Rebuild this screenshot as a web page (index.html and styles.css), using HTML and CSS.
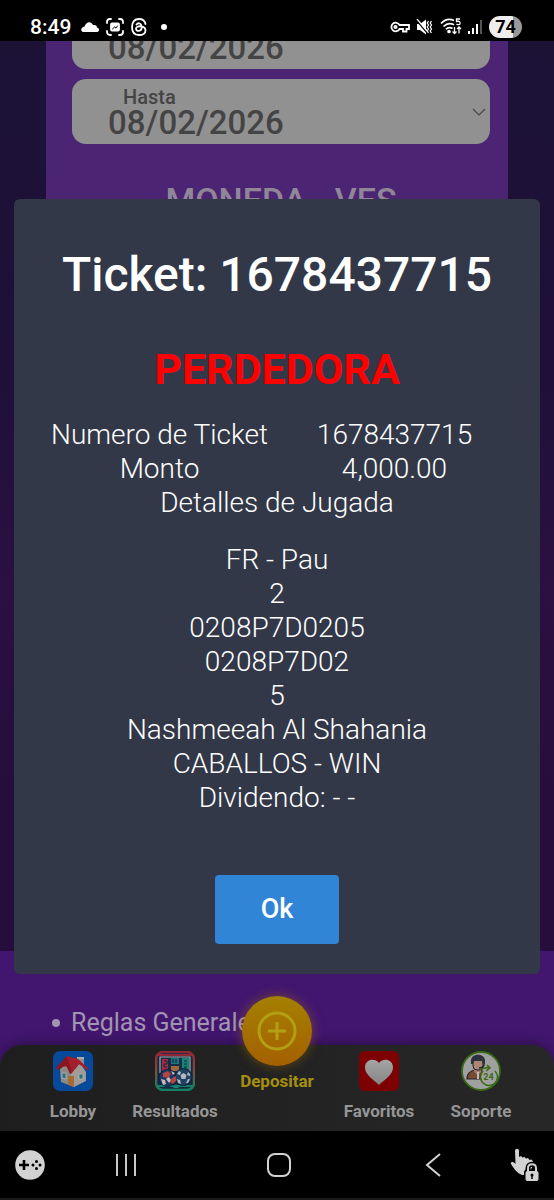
FILE: index.html
```html
<!DOCTYPE html>
<html lang="es">
<head>
<meta charset="utf-8">
<meta name="viewport" content="width=device-width, initial-scale=1">
<title>Ticket</title>
<link rel="stylesheet" href="styles.css">
</head>
<body>
<header class="status">
  <div class="status-group status-left">
    <time class="clock">8:49</time>
    <svg width="18" height="12" viewBox="0 0 18 12" fill="#fff"><path d="M3 11C-1 11-.5 6 3.500 5.500 5 .500 10-.500 12 4c3-.5 4 1 4 2.500 3 .5 2.500 4.500 0 4.500z"/></svg>
    <svg width="18" height="18" viewBox="0 0 18 18" fill="none" stroke="#fff" stroke-width="1.800" stroke-linecap="round"><path d="M1 5V4a3 3 0 0 1 3-3h1M13 1h1a3 3 0 0 1 3 3v1M17 13v1a3 3 0 0 1-3 3h-1M5 17H4a3 3 0 0 1-3-3v-1"/><rect x="5" y="5.500" width="8" height="7" rx="1" fill="#fff"/><path d="M6.500 11l2-2 1.500 1 1.500-2" stroke="#000" stroke-width="1"/></svg>
    <svg width="16" height="18" viewBox="0 0 16 18" fill="none" stroke="#fff" stroke-width="1.800" stroke-linecap="round"><path d="M14.500 6C13.800 2.500 11.500 1 8 1 3.500 1 1 4 1 9s2.500 8 7 8c4 0 6.500-2 6.500-4.600 0-5-9.500-5.400-9.500-1.600 0 3 5.700 2.800 5.700-1.400C10.700 4.800 7 4.500 5.500 6.500"/></svg>
    <span class="dot"></span>
  </div>
  <div class="status-group">
    <svg width="20" height="12" viewBox="0 0 20 12" fill="none" stroke="#fff" stroke-width="1.800"><path d="M9.500 4A4.300 4.300 0 1 0 9.500 8H13v2.500h3.500V8H19V4z"/><circle cx="5.500" cy="6" r="1.200"/></svg>
    <svg class="gap-mute" width="17" height="16" viewBox="0 0 17 16" fill="#fff"><path d="M1 5h3l6-4.500v15L4 11H1z"/><path d="M1 2l11 13" stroke="#000" stroke-width="1.200"/><path d="M1 0l11 13M12.500 2l-1.300 2 1.300 2-1.300 2 1.300 2-1.300 2 1.300 2M15.500 2l-1.300 2 1.300 2-1.300 2 1.300 2-1.300 2 1.300 2" fill="none" stroke="#fff" stroke-width="1.200"/></svg>
    <svg class="gap-wifi" width="22" height="17" viewBox="0 0 22 17" fill="none" stroke="#fff" stroke-width="1.700"><path d="M1 5.500C5 1.300 10 .700 14 2.500M3.500 8.500C6.500 5.500 10.500 5 14 6.800M6 11.200c2-2 4.500-2 6.500-.7"/><circle cx="9" cy="13.500" r="1" fill="#fff"/><path d="M20 1h-3.500v2.500c3-.8 4 .5 3.500 2.200-.5 1.300-2.500 1.300-3.500.3" stroke-width="1.300"/><path d="M14.500 9v6.500M12.500 13.500l2 2 2-2M19 15.500V9M17 11l2-2 2 2" stroke-width="1.300"/></svg>
    <svg width="15" height="16" viewBox="0 0 15 16" fill="#fff"><rect y="12" width="2" height="3"/><rect x="4" y="9" width="2" height="6"/><rect x="8" y="5" width="2" height="10"/><rect x="12" y="1" width="2" height="14" fill="#555"/></svg>
    <span class="battery">74</span>
  </div>
</header>

<div class="app">
  <main class="page">
    <section class="panel">
      <div class="field field-from">
        <select aria-label="Fecha inicial"><option>08/02/2026</option></select>
      </div>
      <div class="field">
        <label for="hasta">Hasta</label>
        <select id="hasta"><option>08/02/2026</option></select>
        <svg class="chevron" width="14" height="8" viewBox="0 0 14 8" fill="none" stroke="#444" stroke-width="1.200"><path d="M1 1l6 6 6-6"/></svg>
      </div>
      <h2 class="currency">MONEDA - VES</h2>
    </section>
  </main>
  <footer class="footer">
    <ul class="links"><li><a href="#reglas">Reglas Generales</a></li></ul>
  </footer>

  <nav class="tabs">
    <a class="tab" href="#lobby">
      <svg width="40" height="40" viewBox="0 0 40 40"><rect width="40" height="40" rx="7" fill="#07499b"/><path d="M7 18l9-8 10 12-5 14-13-5z" fill="#8d8985"/><path d="M18 23l9-11 6 9v9l-12 6-3-2z" fill="#a09b96"/><path d="M24 6h7v10l-7-3z" fill="#8e8d8c"/><path d="M24 6h7v2h-7z" fill="#aaa"/><path d="M3 17L14 5l11 3 11 10-2 1-8-6-7 9-3-6-9-1-2 4z" fill="#a2202c"/><path d="M3 17L14 5l5 17-2 1-4-9-8 5z" fill="#8a1621"/><path d="M15 25h6v11l-6-2z" fill="#a56b35"/><path d="M26 23h4v5h-4zM9 22h4v6l-4-1z" fill="#27717d" stroke="#bbb6ad" stroke-width=".8"/></svg>
      <span>Lobby</span>
    </a>
    <a class="tab" href="#resultados">
      <svg width="40" height="40" viewBox="0 0 40 40"><defs><linearGradient id="rim" x2="0" y2="1"><stop stop-color="#8f2637"/><stop offset=".45" stop-color="#8b4638"/><stop offset="1" stop-color="#118268"/></linearGradient></defs><rect x="1" y="1" width="38" height="38" rx="7" fill="#142940" stroke="url(#rim)" stroke-width="2.500"/><path d="M3 4h34M3 35h34" stroke="url(#rim)" stroke-width="2"/><path d="M5 22V6h30v17" fill="#172c45" stroke="#aaa" stroke-width="1.200"/><path d="M7 8h6v12H7z" fill="#a42c43"/><path d="M9 10h3v3H9v3h3" fill="none" stroke="#142940"/><path d="M16 7h8v6h-8z" fill="#1b777c"/><path d="M18 8v4M21 8v4" stroke="#142940" stroke-width="1.200"/><path d="M16 15h8v5h-8z" fill="#9d693a"/><path d="M27 7h7v13h-7z" fill="#158675"/><path d="M29 10h3M29 13h3M29 16h3" stroke="#142940" stroke-width="1.200"/><circle cx="12.500" cy="27" r="8.500" fill="#1d3762" stroke="#102039"/><circle cx="28.500" cy="26" r="8.500" fill="#1f4163" stroke="#102039"/><path d="M8 22l5-2 3 3-3 4-5-1zM17 27l4-2v5l-3 3-3-2z" fill="#b74345"/><path d="M6 28l4 1 1 4-3 1zM16 20l4 2-2 2zM11 28l3-2 2 3-2 3z" fill="#c5bdb9"/><path d="M25.500 24l3-2 3 2-1 4h-4zM22 23l2-3 2 1-1 3zM33 21l2 2v2l-3-1zM22 28l3 1 1 4-3-1zM33 28h2l-2 4-2 0z" fill="#b4b8bc"/><path d="M18 37l3-4 3 4z" fill="#178875"/></svg>
      <span>Resultados</span>
    </a>
    <a class="tab deposit" href="#depositar">
      <span class="coin"><svg width="40" height="40" viewBox="0 0 40 40" fill="none" stroke="#b3a012" stroke-width="3"><circle cx="20" cy="20" r="18"/><path d="M20 11v18M11 20h18"/></svg></span>
      <span>Depositar</span>
    </a>
    <a class="tab" href="#favoritos">
      <svg width="40" height="40" viewBox="0 0 40 40"><defs><linearGradient id="heart" x2="0" y2="1"><stop stop-color="#a5a5a5"/><stop offset="1" stop-color="#858585"/></linearGradient></defs><rect width="40" height="40" rx="6" fill="#7d0003"/><path d="M20 34C15 29 6 24 6 16.500 6 8 16 6.500 20 12c4-5.500 14-4 14 4.500C34 24 25 29 20 34z" fill="url(#heart)"/></svg>
      <span>Favoritos</span>
    </a>
    <a class="tab" href="#soporte">
      <svg width="40" height="40" viewBox="0 0 40 40"><circle cx="20" cy="20" r="19" fill="#a0a0a0" stroke="#376b16" stroke-width="1.800"/><path d="M6 28c0-6 3-8 8-9h4c5 1 7 3 7 9z" fill="#774b31" stroke="#24242e" stroke-width="1.200"/><path d="M13 17v4l4 3 3-3v-4z" fill="#a77c6b"/><rect x="12" y="7" width="10" height="12" rx="4" fill="#ac8575" stroke="#24242e"/><path d="M10 13V9c1-7 13-7 14 0v4h-2l-1-3H13l-1 3z" fill="#30313f"/><path d="M23 13c0 3-2 4-5 4" fill="none" stroke="#24242e" stroke-width="1.500"/><path d="M17 21v7" stroke="#bbb" stroke-width="2"/><circle cx="28" cy="26" r="8" fill="#a0a0a0"/><path d="M22 20A8.500 8.500 0 1 0 34 20M19 19c3-2 6-3 10-2M26 14l3 3-4 3" fill="none" stroke="#376b16" stroke-width="1.500"/><text x="27.500" y="29" class="badge-text" text-anchor="middle">24</text></svg>
      <span>Soporte</span>
    </a>
  </nav>

  <div class="overlay">
    <div class="modal" role="dialog" aria-modal="true" aria-labelledby="ticket-title">
      <h1 class="title" id="ticket-title">Ticket: 1678437715</h1>
      <h2 class="result">PERDEDORA</h2>
      <table class="summary">
        <tbody>
          <tr><td>Numero de Ticket</td><td>1678437715</td></tr>
          <tr><td>Monto</td><td>4,000.00</td></tr>
          <tr><td colspan="2">Detalles de Jugada</td></tr>
        </tbody>
      </table>
      <div class="details">
        <div>FR - Pau</div>
        <div>2</div>
        <div>0208P7D0205</div>
        <div>0208P7D02</div>
        <div>5</div>
        <div>Nashmeeah Al Shahania</div>
        <div>CABALLOS - WIN</div>
        <div>Dividendo: - -</div>
      </div>
      <button class="ok" type="button">Ok</button>
    </div>
  </div>
</div>

<div class="system">
  <button type="button" aria-label="Juegos"><svg width="30" height="30" viewBox="0 0 30 30"><circle cx="15" cy="15" r="14.800" fill="#d2d2d2"/><path d="M9 10v10M4 15h10" stroke="#000" stroke-width="2.600"/><g fill="#000"><circle cx="21.500" cy="11.500" r="1.500"/><circle cx="21.500" cy="18.500" r="1.500"/><circle cx="18" cy="15" r="1.500"/><circle cx="25" cy="15" r="1.500"/></g></svg></button>
  <div class="system-main">
    <button type="button" aria-label="Recientes"><svg width="24" height="24" viewBox="0 0 24 24" stroke="#c8c8c8" stroke-width="2"><path d="M3 1v22M12 1v22M21 1v22"/></svg></button>
    <button type="button" aria-label="Inicio"><svg width="24" height="24" viewBox="0 0 24 24" fill="none" stroke="#d2d2d2" stroke-width="2"><rect x="1" y="1" width="22" height="22" rx="7"/></svg></button>
    <button type="button" aria-label="Atrás"><svg width="24" height="24" viewBox="0 0 24 24" fill="none" stroke="#d2d2d2" stroke-width="2"><path d="M19 1L6 12l13 11"/></svg></button>
  </div>
  <button type="button" aria-label="Bloqueo táctil"><svg width="30" height="34" viewBox="0 0 30 34" fill="#d2d2d2"><path d="M5 3c0-3 4-3 4 0v6l2-1 1.500 1.500 2-.5 1.500 1.500 2-.5L19.500 12l2-.5 1.500 2V18l-6 9h-5c-5-2-8-6-11-11-1-2 2-3 4.500 0z"/><path d="M18 24v-4c0-5 8-5 8 0v4" fill="none" stroke="#000" stroke-width="5"/><rect x="14" y="21.500" width="16" height="12.500" rx="3" fill="#000"/><path d="M18 24v-4c0-5 8-5 8 0v4" fill="none" stroke="#d2d2d2" stroke-width="2"/><rect x="15.500" y="23" width="13" height="10" rx="2"/><circle cx="22" cy="27" r="1.500" fill="#000"/><path d="M22 27v4" stroke="#000" stroke-width="1.500"/></svg></button>
</div>
</body>
</html>
```
FILE: styles.css
```css
* { box-sizing: border-box; }

body {
  margin: 0;
  height: 100vh;
  display: flex;
  flex-direction: column;
  background: #000;
  font-family: Roboto, "Liberation Sans", sans-serif;
}

svg { display: block; flex: none; }
h1, h2, ul { margin: 0; padding: 0; }
button { font: inherit; border: 0; padding: 0; background: none; }
a { color: inherit; text-decoration: none; }

.status {
  flex: none;
  height: 41px;
  padding: 12px 32px 0 30px;
  display: flex;
  justify-content: space-between;
  color: #fff;
}
.status-group { display: flex; align-items: center; gap: 6px; }
.status-left { gap: 7px; }
.clock { font-size: 21px; font-weight: 500; line-height: 28px; margin-right: 3px; }
.dot { width: 6px; height: 6px; border-radius: 50%; background: #fff; margin-left: 7px; }
.gap-wifi { margin-left: 1px; }
.battery {
  width: 33px;
  height: 22px;
  border-radius: 11px;
  background: linear-gradient(90deg, #eee 74%, #999 74%);
  color: #000;
  font-size: 18px;
  font-weight: 700;
  line-height: 22px;
  text-align: center;
}

.app {
  flex: 1;
  min-height: 0;
  position: relative;
  overflow: hidden;
  display: flex;
  flex-direction: column;
  background: linear-gradient(#1c1236, #1e1039 30%, #2b1041 50%, #260d3b 70%, #270d3b);
}
.page {
  flex: 1;
  min-height: 0;
  overflow: hidden;
  padding: 0 46px;
  display: flex;
}
.panel {
  flex: 1;
  margin-top: -48px;
  padding: 11px 18px 0 26px;
  display: flex;
  flex-direction: column;
  gap: 10px;
  background: #4b2573;
}
.field {
  flex: none;
  position: relative;
  height: 65px;
  padding: 8px 0 0 36px;
  display: flex;
  flex-direction: column;
  border-radius: 14px;
  background: #919191;
  color: #444;
}
.field-from { padding-top: 28px; }
.field label { padding-left: 15px; font-size: 20px; font-weight: 500; line-height: 20px; }
.field select {
  appearance: none;
  border: 0;
  padding: 0;
  background: none;
  color: inherit;
  font: 500 33px/32px Roboto, "Liberation Sans", sans-serif;
}
.chevron { position: absolute; right: 4px; top: 29px; }
.currency {
  margin-top: 26px;
  text-align: center;
  font-size: 34px;
  font-weight: 500;
  line-height: 40px;
  color: #8f8798;
}

.footer { flex: none; height: 180px; padding: 56px 0 0 52px; background: #42166f; }
.links { list-style: none; font-size: 25px; line-height: 32px; color: #a294b3; }
.links li { display: flex; align-items: center; gap: 11px; }
.links li::before { content: ""; width: 8px; height: 8px; border-radius: 50%; background: #a294b3; }

.tabs {
  position: absolute;
  left: 0;
  right: 0;
  bottom: 0;
  height: 86px;
  padding: 6px 22px 0;
  display: grid;
  grid-template-columns: repeat(5, 1fr);
  border-radius: 22px 22px 0 0;
  background: linear-gradient(90deg, #1e1e1e, #272727);
  box-shadow: 0 -2px 12px rgba(0, 0, 0, 0.35);
  color: #969696;
}
.tab {
  display: flex;
  flex-direction: column;
  align-items: center;
  gap: 10px;
  font-size: 17px;
  font-weight: 700;
  line-height: 20px;
}
.deposit { margin-top: -55px; gap: 5px; color: #a58f0e; }
.coin {
  width: 70px;
  height: 70px;
  flex: none;
  border-radius: 50%;
  display: grid;
  place-items: center;
  background: linear-gradient(#a48000, #a46000);
  box-shadow: 0 0 12px rgba(170, 115, 0, 0.5);
}
.badge-text { font: 700 9px Roboto, sans-serif; fill: #376b16; }

.overlay {
  position: absolute;
  inset: 0;
  padding: 0 14px;
  display: flex;
  align-items: center;
}
.modal {
  flex: 1;
  padding: 47px 28px 30px;
  display: flex;
  flex-direction: column;
  align-items: center;
  border-radius: 6px;
  background: #323848;
  color: #fff;
  text-align: center;
}
.title { font-size: 48px; font-weight: 500; line-height: 58px; }
.result { margin: 40px 0 24px; font-size: 43px; font-weight: 700; line-height: 50px; color: #f00; }
.summary {
  width: 100%;
  table-layout: fixed;
  border-collapse: collapse;
  font-size: 28px;
  font-weight: 300;
  line-height: 34px;
}
.summary td { padding: 0; }
.details { margin-top: 23px; font-size: 28px; font-weight: 300; line-height: 34px; }
.ok {
  margin-top: 60px;
  padding: 0 46px;
  border-radius: 4px;
  background: #3085d6;
  color: #fff;
  font-size: 27px;
  font-weight: 500;
  line-height: 69px;
}

.system {
  flex: none;
  height: 69px;
  padding: 0 14px 0 15px;
  display: flex;
  align-items: center;
  border-bottom: 2px solid #1a1a1a;
}
.system-main { flex: 1; margin-left: 4px; display: flex; justify-content: space-around; }
```
